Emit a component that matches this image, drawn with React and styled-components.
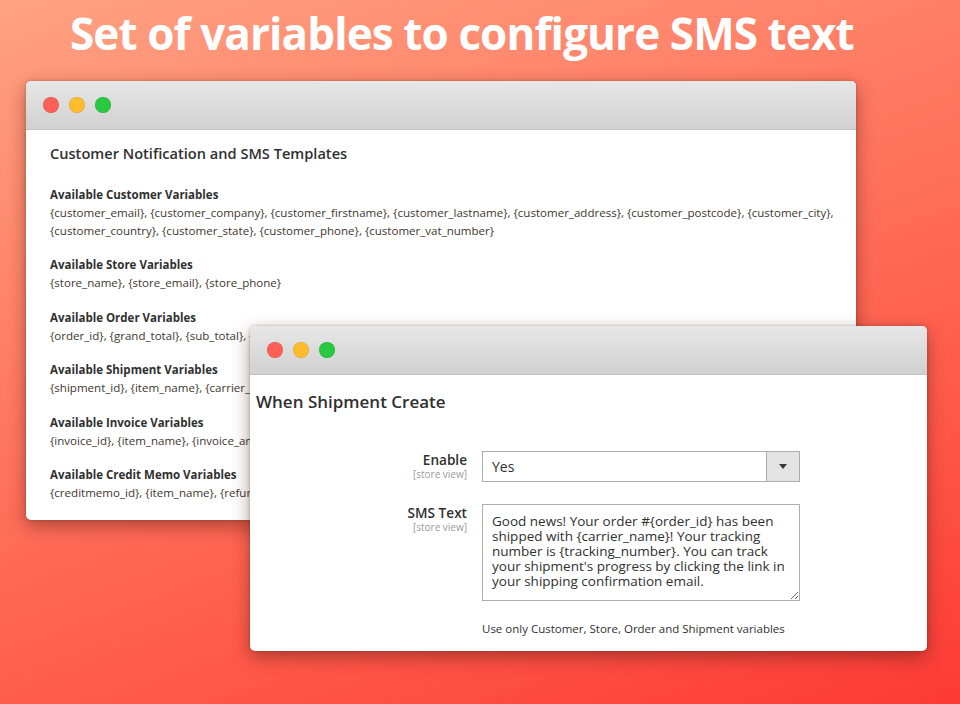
import styled, { createGlobalStyle } from 'styled-components';

const GlobalStyle = createGlobalStyle`
  html, body {
    margin: 0;
    padding: 0;
  }
  body {
    font-family: "Open Sans", "Liberation Sans", sans-serif;
  }
`;

const Page = styled.div`
  position: relative;
  width: 960px;
  height: 704px;
  overflow: hidden;
  background: linear-gradient(160deg, #ffa283 0%, #ff7a62 38%, #ff5849 72%, #fc3a36 100%);
`;

const Title = styled.h1`
  margin: 0;
  padding: 5px 0 0 70px;
  height: 81px;
  box-sizing: border-box;
  font-family: "Open Sans", "DejaVu Sans Condensed", sans-serif;
  font-stretch: 88%;
  font-weight: 700;
  font-size: 44px;
  line-height: 56px;
  letter-spacing: -0.9px;
  color: #fff;
  white-space: nowrap;
`;

const Desk = styled.div`
  position: relative;
  padding-left: 26px;
`;

const Window = styled.div`
  width: ${p => p.width}px;
  background: #fff;
  border-radius: 5px;
  overflow: hidden;
  box-shadow: 0 6px 18px rgba(70, 25, 15, 0.45), 0 0 3px rgba(0, 0, 0, 0.25);
`;

const FloatingWindow = styled(Window)`
  position: absolute;
  left: 250px;
  top: 245px;
`;

const TitleBar = styled.div`
  height: 48px;
  display: flex;
  align-items: center;
  gap: 10px;
  padding-left: 17px;
  background: linear-gradient(#e7e7e7, #d1d1d1);
  border-bottom: 1px solid #c2c2c2;
`;

const Light = styled.span`
  width: 16px;
  height: 16px;
  border-radius: 50%;
  background: ${p => p.color};
  box-shadow: inset 0 0 0 0.5px rgba(0, 0, 0, 0.12);
`;

const Body = styled.div`
  padding: ${p => p.pad};
  color: #303030;
`;

const Heading = styled.h2`
  margin: 0;
  font-weight: 600;
  font-size: ${p => p.size}px;
  line-height: 20px;
  color: #303030;
`;

const Section = styled.div`
  margin-bottom: 17px;
  &:last-child {
    margin-bottom: 0;
  }
`;

const VarLabel = styled.div`
  font-size: 11.5px;
  font-weight: 700;
  line-height: 18px;
  color: #303030;
`;

const VarList = styled.div`
  font-size: 11.55px;
  line-height: 17.5px;
  color: #41362f;
  white-space: nowrap;
`;

const Sections = styled.div`
  margin-top: 23px;
`;

const Form = styled.div`
  display: grid;
  grid-template-columns: 211px 318px;
  column-gap: 15px;
  row-gap: 22px;
  margin-top: 39px;
`;

const Label = styled.div`
  text-align: right;
  font-size: 13.6px;
  font-weight: 600;
  line-height: 17px;
  color: #303030;
`;

const Scope = styled.div`
  font-size: 10px;
  font-weight: 400;
  line-height: 12px;
  color: #999;
`;

const Select = styled.div`
  height: 31px;
  box-sizing: border-box;
  border: 1px solid #adadad;
  display: flex;
  align-items: stretch;
`;

const SelectValue = styled.div`
  flex: 1;
  padding-left: 9px;
  display: flex;
  align-items: center;
  font-size: 14px;
  color: #303030;
`;

const SelectButton = styled.div`
  width: 32px;
  background: #e3e3e3;
  border-left: 1px solid #adadad;
  display: flex;
  align-items: center;
  justify-content: center;
  &::after {
    content: "";
    border-left: 4px solid transparent;
    border-right: 4px solid transparent;
    border-top: 5px solid #41362f;
  }
`;

const TextArea = styled.textarea`
  display: block;
  width: 318px;
  height: 97px;
  box-sizing: border-box;
  margin: 0;
  border: 1px solid #adadad;
  border-radius: 0;
  padding: 9px 9px 6px;
  font-family: "Open Sans", "Liberation Sans", sans-serif;
  font-size: 13.5px;
  line-height: 15px;
  color: #303030;
  resize: vertical;
  outline: none;
`;

const Hint = styled.div`
  margin-top: 21px;
  font-size: 11.5px;
  line-height: 14px;
  color: #303030;
`;

const variables = [
  {
    label: 'Available Customer Variables',
    lines: [
      '{customer_email}, {customer_company}, {customer_firstname}, {customer_lastname}, {customer_address}, {customer_postcode}, {customer_city},',
      '{customer_country}, {customer_state}, {customer_phone}, {customer_vat_number}',
    ],
  },
  { label: 'Available Store Variables', lines: ['{store_name}, {store_email}, {store_phone}'] },
  { label: 'Available Order Variables', lines: ['{order_id}, {grand_total}, {sub_total}, {order_date}'] },
  { label: 'Available Shipment Variables', lines: ['{shipment_id}, {item_name}, {carrier_name}, {tracking_number}'] },
  { label: 'Available Invoice Variables', lines: ['{invoice_id}, {item_name}, {invoice_amount}'] },
  { label: 'Available Credit Memo Variables', lines: ['{creditmemo_id}, {item_name}, {refund_amount}'] },
];

const smsText =
  "Good news! Your order #{order_id} has been shipped with {carrier_name}! Your tracking number is {tracking_number}. You can track your shipment's progress by clicking the link in your shipping confirmation email.";

const Lights = () => (
  <TitleBar>
    <Light color="#fe5f57" />
    <Light color="#febc2e" />
    <Light color="#28c840" />
  </TitleBar>
);

const App = () => {
  return (
    <Page>
      <GlobalStyle />
      <Title>Set of variables to configure SMS text</Title>
      <Desk>
        <Window width={830}>
          <Lights />
          <Body pad="13px 24px 18px">
            <Heading size={14.6}>Customer Notification and SMS Templates</Heading>
            <Sections>
              {variables.map(v => (
                <Section key={v.label}>
                  <VarLabel>{v.label}</VarLabel>
                  {v.lines.map(l => <VarList key={l}>{l}</VarList>)}
                </Section>
              ))}
            </Sections>
          </Body>
        </Window>

        <FloatingWindow width={677}>
          <Lights />
          <Body pad="17px 6px 15px">
            <Heading size={17}>When Shipment Create</Heading>
            <Form>
              <Label>
                Enable
                <Scope>[store view]</Scope>
              </Label>
              <Select>
                <SelectValue>Yes</SelectValue>
                <SelectButton />
              </Select>
              <Label>
                SMS Text
                <Scope>[store view]</Scope>
              </Label>
              <div>
                <TextArea readOnly defaultValue={smsText} />
                <Hint>Use only Customer, Store, Order and Shipment variables</Hint>
              </div>
            </Form>
          </Body>
        </FloatingWindow>
      </Desk>
    </Page>
  );
};

export default App;
